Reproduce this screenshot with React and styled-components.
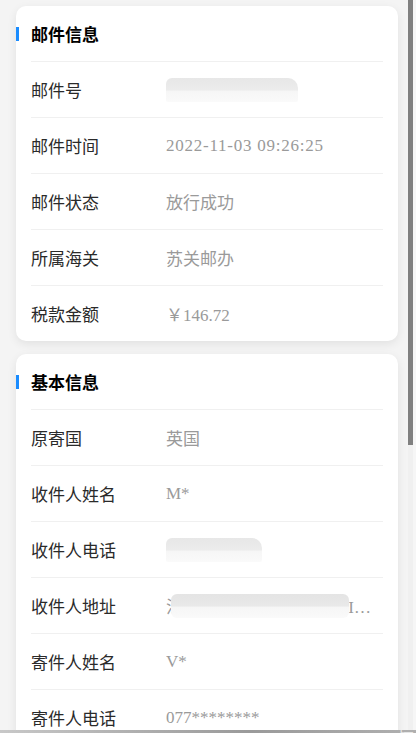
import React from "react";
import styled, { createGlobalStyle } from "styled-components";

const mailRows = [
  { label: "邮件号", blur: 132 },
  { label: "邮件时间", value: "2022-11-03 09:26:25", spaced: true },
  { label: "邮件状态", value: "放行成功" },
  { label: "所属海关", value: "苏关邮办" },
  { label: "税款金额", value: "￥146.72" },
];

const baseRows = [
  { label: "原寄国", value: "英国" },
  { label: "收件人姓名", value: "M*" },
  { label: "收件人电话", blur: 96 },
  { label: "收件人地址", value: "江苏省苏州市工业园区XIANGAN路", cover: true },
  { label: "寄件人姓名", value: "V*" },
  { label: "寄件人电话", value: "077********" },
];

const InfoCard = ({ title, rows }) => (
  <Card>
    <CardHeader>{title}</CardHeader>
    {rows.map((row) => (
      <Row key={row.label}>
        <Label>{row.label}</Label>
        {row.blur ? (
          <Blur $w={row.blur} />
        ) : (
          <Value $spaced={row.spaced}>
            {row.value}
            {row.cover && <Cover />}
          </Value>
        )}
      </Row>
    ))}
  </Card>
);

const App = () => {
  return (
    <>
      <GlobalStyle />
      <Page>
        <InfoCard title="邮件信息" rows={mailRows} />
        <InfoCard title="基本信息" rows={baseRows} />
      </Page>
      <ScrollTrack>
        <ScrollThumb />
      </ScrollTrack>
      <BottomBar>
        <BottomBtn>提</BottomBtn>
      </BottomBar>
    </>
  );
};

//----------------------- Global / Page ---------------------------------

const GlobalStyle = createGlobalStyle`
  html, body {
    margin: 0;
    padding: 0;
    background: #f4f4f4;
    overflow: hidden;
    font-family: "Noto Sans CJK SC", "Noto Sans", sans-serif;
  }
`;

const Page = styled.div`
  padding: 6px 18px 0 16px;
  display: flex;
  flex-direction: column;
  gap: 13px;
`;

//----------------------- Card ---------------------------------

const Card = styled.div`
  background: #fff;
  border-radius: 10px;
  box-shadow: 0 3px 10px rgba(0, 0, 0, 0.08);
`;

const CardHeader = styled.div`
  position: relative;
  height: 55px;
  display: flex;
  align-items: center;
  padding-left: 15px;
  font-size: 17px;
  font-weight: bold;
  color: #000;

  &::before {
    content: "";
    position: absolute;
    left: 0;
    top: 21px;
    width: 3px;
    height: 14px;
    background: #1a8cff;
  }
`;

const Row = styled.div`
  height: 55px;
  margin: 0 15px;
  border-top: 1px solid #f0f0f0;
  display: flex;
  align-items: center;
`;

const Label = styled.div`
  width: 135px;
  flex-shrink: 0;
  font-size: 17px;
  color: #2a2a2a;
`;

const Value = styled.div`
  position: relative;
  flex: 1;
  min-width: 0;
  font-family: "Liberation Serif", "Noto Sans CJK SC", serif;
  font-size: 17px;
  color: #9a9a9a;
  letter-spacing: ${(p) => (p.$spaced ? "0.75px" : "0")};
  white-space: nowrap;
  overflow: hidden;
  text-overflow: ellipsis;
  padding-right: 10px;
`;

const Blur = styled.div`
  width: ${(p) => p.$w}px;
  height: 24px;
  border-radius: 6px 10px 2px 2px;
  background: linear-gradient(180deg, #e7e7e7 0%, #ececec 50%, #f6f6f6 55%, #fafafa 100%);
`;

const Cover = styled.span`
  position: absolute;
  left: 5px;
  right: 34px;
  top: 1px;
  bottom: 0;
  background: linear-gradient(180deg, #e4e4e4 0%, #e9e9e9 50%, #f6f6f6 55%, #fafafa 100%);
  border-radius: 6px;
`;

//----------------------- Overlays ---------------------------------

const ScrollTrack = styled.div`
  position: fixed;
  top: 0;
  bottom: 0;
  left: 408px;
  width: 8px;
  background: linear-gradient(90deg, #f0f0f0 0 5px, #f6f6f6 5px);
`;

const ScrollThumb = styled.div`
  width: 5px;
  height: 445px;
  background: #808080;
`;

const BottomBar = styled.div`
  position: fixed;
  left: 0;
  right: 0;
  bottom: 0;
  height: 3px;
  overflow: hidden;
  background: linear-gradient(90deg, #c8c8c8, #9a9a9a 60%, #b0b0b0);
  display: flex;
  justify-content: flex-end;
`;

const BottomBtn = styled.div`
  font-size: 16px;
  line-height: 3px;
  color: rgba(255, 255, 255, 0.7);
  padding-right: 2px;
`;

export default App;
